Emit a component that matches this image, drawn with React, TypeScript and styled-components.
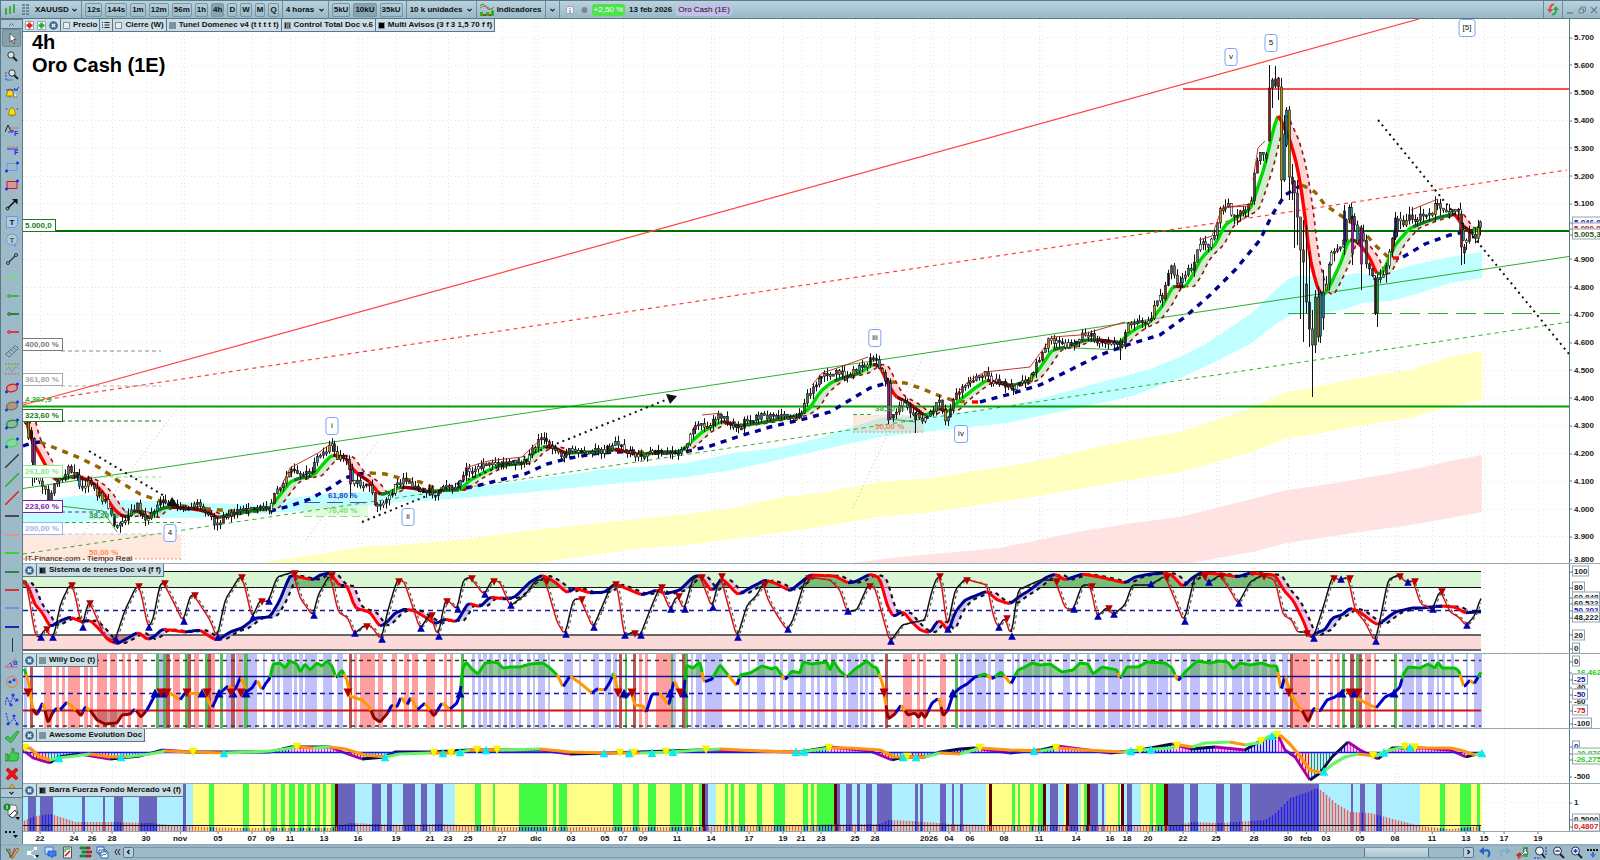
import React from "react";
import styled, { createGlobalStyle, css } from "styled-components";

/* ------------------------------------------------------------------ */
/* Palette and global rules                                            */
/* ------------------------------------------------------------------ */

const steel = "#9cbac7";
const edge = "#5c7886";
const rule = "#93a9b3";

const GlobalStyle = createGlobalStyle`
  * { box-sizing: border-box; }
  html, body { margin: 0; padding: 0; height: 100%; }
  body {
    background: #fff;
    color: #111;
    font-family: "Liberation Sans", Arial, sans-serif;
    font-size: 8px;
    line-height: 10px;
    overflow: hidden;
  }
  button, select {
    font: inherit;
    color: inherit;
    margin: 0;
    padding: 0;
    border: 0;
    background: none;
  }
  svg { display: block; }
`;

/* ------------------------------------------------------------------ */
/* Numeric helpers                                                     */
/* ------------------------------------------------------------------ */

type Pt = [number, number];
type Span = [number, number];

const pts = (s: string): Pt[] =>
  s
    .trim()
    .split(/\s+/)
    .map((p) => p.split(",").map(Number) as Pt);

const at = (data: Pt[], x: number): number => {
  if (x <= data[0][0]) return data[0][1];
  for (let i = 1; i < data.length; i++) {
    if (x <= data[i][0]) {
      const [x0, y0] = data[i - 1];
      const [x1, y1] = data[i];
      return y0 + ((y1 - y0) * (x - x0)) / (x1 - x0);
    }
  }
  return data[data.length - 1][1];
};

const smooth = (data: Pt[], step: number, radius: number): Pt[] => {
  const out: Pt[] = [];
  const last = data[data.length - 1][0];
  for (let x = data[0][0]; x <= last; x += step) {
    const y = (at(data, x - radius) + 2 * at(data, x) + at(data, x + radius)) / 4;
    out.push([x, y]);
  }
  return out;
};

const line = (data: Pt[]) => "M" + data.map((p) => `${p[0]} ${p[1].toFixed(1)}`).join("L");
const area = (top: Pt[], bottom: Pt[]) => line([...top, ...[...bottom].reverse()]) + "Z";

type Run = { color: string; d: string };

const runs = (data: Pt[], pick: (a: Pt, b: Pt) => string): Run[] => {
  const out: { color: string; data: Pt[] }[] = [];
  for (let i = 1; i < data.length; i++) {
    const color = pick(data[i - 1], data[i]);
    const tail = out[out.length - 1];
    if (tail && tail.color === color) tail.data.push(data[i]);
    else out.push({ color, data: [data[i - 1], data[i]] });
  }
  return out.map((r) => ({ color: r.color, d: line(r.data) }));
};

const lag = (data: Pt[], dx: number): Pt[] => data.map(([x]) => [x, at(data, x - dx)]);

const ribbon = (a: Pt[], b: Pt[], up: string, down: string): Run[] => {
  const out: Run[] = [];
  for (let i = 1; i < a.length; i++) {
    const color = a[i][1] < b[i][1] ? up : down;
    out.push({ color, d: area([a[i - 1], a[i]], [b[i - 1], b[i]]) });
  }
  return out;
};

const seeded = (seed: number) => () => {
  seed = (seed * 1103515245 + 12345) % 2147483648;
  return seed / 2147483648;
};

/* ------------------------------------------------------------------ */
/* Price data                                                          */
/* ------------------------------------------------------------------ */

const price = pts(`24,424 28,432 32,442 34,478 40,482 48,498 52,490 55,478 60,480 68,470 75,472 82,490 88,478 95,490
103,500 108,508 113,520 118,528 123,520 130,513 137,506 145,522 150,517 158,502 165,500 175,505 185,510 195,503
208,512 213,522 218,525 225,515 240,512 255,508 270,508 274,495 280,485 290,470 300,473 310,475 318,455 325,452
332,445 337,460 345,455 350,472 352,480 360,485 370,487 375,505 382,505 390,492 400,483 404,478 412,488 420,490
430,490 436,500 442,487 452,490 458,485 465,470 475,472 485,463 500,463 525,462 530,450 543,438 550,445 562,455
575,448 590,452 605,450 616,443 625,450 640,458 655,452 670,453 684,449 690,435 700,420 705,428 715,418 722,415
730,425 740,428 745,420 760,416 780,417 800,415 805,397 813,387 822,376 830,373 837,370 848,377 855,370 862,366
870,360 876,362 883,375 887,385 889,418 895,415 903,400 908,410 915,415 922,420 930,412 940,400 945,418 950,412
955,395 965,385 975,380 985,373 990,380 1000,382 1013,388 1020,378 1030,380 1040,355 1050,338 1060,345 1072,345
1080,336 1090,335 1100,343 1115,340 1122,345 1128,325 1138,323 1148,322 1155,307 1162,295 1168,270 1172,268
1178,288 1183,280 1192,265 1200,243 1208,248 1215,230 1220,210 1228,207 1235,220 1243,210 1250,207 1253,180
1258,152 1266,155 1326,280 1330,255 1338,250 1345,232 1348,205 1352,215 1356,240 1362,235 1366,262 1372,275
1378,285 1384,272 1390,245 1396,220 1402,225 1408,215 1413,222 1420,215 1430,212 1438,205 1441,210 1450,212
1458,213 1461,240 1464,245 1470,232 1475,235 1480,222`);

type Candle = { x: number; hi: number; lo: number; top: number; bot: number; fill: string };

const bodies = ["#4a4a4a", "#2c2c2c", "#159aa8", "#b09a1a", "#a01818", "#2f7f38", "#f4f4f4", "#555", "#111", "#777"];

const spike: [number, number, number, number, number, string][] = [
  [1269, 65, 141, 88, 141, "#a01010"],
  [1272, 78, 108, 80, 88, "#4a4a4a"],
  [1275, 66, 88, 79, 86, "#2c2c2c"],
  [1278, 77, 100, 78, 87, "#b01010"],
  [1281, 78, 203, 87, 180, "#a89400"],
  [1284, 115, 182, 134, 180, "#147f93"],
  [1286, 107, 147, 110, 145, "#147f93"],
  [1289, 106, 200, 110, 177, "#a89400"],
  [1292, 164, 200, 177, 184, "#333"],
  [1294, 180, 248, 181, 193, "#8a1a8a"],
  [1297, 180, 245, 193, 217, "#7a3a6a"],
  [1300, 217, 319, 217, 250, "#777"],
  [1303, 220, 342, 250, 262, "#5a4a1a"],
  [1306, 225, 313, 284, 302, "#444"],
  [1309, 252, 347, 302, 329, "#222"],
  [1312, 310, 397, 329, 345, "#777"],
  [1315, 290, 353, 297, 345, "#1d8a2a"],
  [1318, 286, 342, 297, 337, "#a05a10"],
  [1320, 290, 343, 293, 336, "#147f93"],
  [1323, 270, 330, 292, 318, "#147f93"],
];

const candles: Candle[] = (() => {
  const rnd = seeded(41);
  const out: Candle[] = [];
  let prev = 420;
  for (let i = 0; i < 509; i++) {
    const x = Math.round(25 + i * 2.865);
    if (x > 1267 && x < 1325) {
      prev = 290;
      continue;
    }
    const wild = x > 1325 ? 1.4 : x > 1150 || (x > 34 && x < 130) ? 1.3 : 1;
    const close = at(price, x) + (rnd() - 0.5) * 6 * wild;
    const top = Math.min(prev, close);
    const bot = Math.max(prev, close, top + 2);
    out.push({
      x,
      top,
      bot,
      hi: top - rnd() * 6 * wild,
      lo: bot + rnd() * 6 * wild,
      fill: bodies[Math.floor(rnd() * bodies.length)],
    });
    prev = close;
  }
  spike.forEach(([x, hi, lo, top, bot, fill]) => out.push({ x, hi, lo, top, bot, fill }));
  out.push({ x: 28, hi: 420, lo: 440, top: 422, bot: 438, fill: "#a89400" });
  out.push({ x: 32, hi: 432, lo: 486, top: 438, bot: 462, fill: "#9a109a" });
  out.push({ x: 350, hi: 462, lo: 498, top: 470, bot: 484, fill: "#9a109a" });
  out.push({ x: 888, hi: 378, lo: 424, top: 381, bot: 420, fill: "#a010a0" });
  out.push({ x: 915, hi: 412, lo: 433, top: 415, bot: 420, fill: "#333" });
  out.push({ x: 1120, hi: 338, lo: 360, top: 341, bot: 348, fill: "#333" });
  out.push({ x: 1344, hi: 205, lo: 255, top: 211, bot: 245, fill: "#14147f" });
  out.push({ x: 1352, hi: 215, lo: 265, top: 219, bot: 253, fill: "#b010b0" });
  out.push({ x: 1361, hi: 225, lo: 290, top: 228, bot: 264, fill: "#b010b0" });
  out.push({ x: 1375, hi: 276, lo: 315, top: 278, bot: 313, fill: "#3a1010" });
  out.push({ x: 1377, hi: 275, lo: 327, top: 278, bot: 313, fill: "#2a9a3a" });
  out.push({ x: 1395, hi: 212, lo: 240, top: 218, bot: 238, fill: "#14147f" });
  out.push({ x: 1461, hi: 211, lo: 265, top: 214, bot: 247, fill: "#a01010" });
  out.push({ x: 1464, hi: 244, lo: 264, top: 247, bot: 253, fill: "#333" });
  return out;
})();

const fastAvg = smooth(
  pts(`27,420 30,437 40,455 48,470 55,480 65,478 75,476 88,480 97,486 105,495 113,508 120,515 128,517 137,510
143,515 150,518 158,510 167,507 185,508 200,510 210,513 217,518 228,515 245,512 270,508 280,495 290,482 300,478
313,476 325,462 332,455 345,457 355,472 370,482 380,495 390,492 400,487 412,488 430,492 445,490 460,490 470,480
485,472 497,466 525,463 535,452 545,446 555,448 565,453 590,452 605,452 615,449 640,455 655,452 680,452 690,443
702,432 715,425 722,421 737,426 760,423 780,419 800,415 810,408 820,392 832,382 845,377 860,373 873,364 880,366
887,382 895,396 910,404 925,416 938,408 948,412 960,400 975,388 987,380 1000,383 1012,386 1030,380 1040,368
1052,350 1070,346 1085,340 1100,340 1120,343 1127,335 1137,328 1150,322 1163,305 1173,286 1185,287 1193,275
1200,260 1207,252 1215,245 1225,225 1235,218 1250,210 1257,190 1265,165 1272,135 1278,113 1283,125 1290,140
1297,165 1303,200 1310,260 1318,290 1323,296 1328,290 1335,275 1342,260 1348,240 1355,240 1362,247 1370,258
1377,275 1383,272 1395,245 1410,228 1425,222 1440,217 1455,214 1462,225 1472,233 1481,225`),
  3,
  2,
);
const fastLag = lag(fastAvg, 9);

const slowAvg: [string, Pt[]][] = [
  ["#00008b", pts("23,446 32,443 40,442")],
  ["#966400", pts("40,442 60,450 80,458 100,468 120,482 140,494 157,500 175,505 200,508 230,511 265,511")],
  ["#00008b", pts("270,511 290,506 310,499 330,488 345,478 358,474 370,473")],
  ["#966400", pts("370,473 385,474 400,478 420,482 432,487 450,490 460,489")],
  ["#ff0000", pts("460,489 466,489")],
  ["#00008b", pts("466,488 480,485 500,480 525,474 547,464 570,458 600,453 635,451")],
  ["#966400", pts("638,452 652,453")],
  ["#ff0000", pts("652,453 662,453")],
  ["#00008b", pts("662,453 685,452 710,446 740,436 770,427 800,420 830,412 850,400 870,388 890,382")],
  ["#966400", pts("890,382 905,383 920,388 940,396 955,401 970,402")],
  ["#ff0000", pts("972,402 980,402")],
  ["#00008b", pts("980,402 1010,394 1040,385 1070,370 1100,355 1130,344 1160,335 1185,317 1210,295 1235,270 1260,240 1272,215 1285,195 1302,185")],
  ["#966400", pts("1302,185 1315,192 1325,205 1340,215 1360,228 1375,245 1388,257")],
  ["#ff0000", pts("1393,258 1402,258")],
  ["#00008b", pts("1403,257 1425,244 1450,235 1480,229")],
];

const bands: [string, Pt[], Pt[]][] = [
  [
    "#bfffff",
    pts(`23,503 60,498 83,495 120,500 160,501 200,503 260,505 290,498 333,493 400,491 467,488 533,480 600,470 687,463
733,453 777,448 820,438 852,427 880,418 933,415 960,412 1007,406 1050,396 1083,387 1117,378 1150,369 1180,357
1207,343 1252,313 1270,295 1287,280 1300,275 1327,279 1357,273 1380,275 1413,265 1450,257 1482,252`),
    pts(`23,525 60,524 120,517 160,518 200,518 270,513 333,509 400,502 467,498 533,492 600,485 687,477 733,470 800,455
852,443 880,437 933,431 1007,423 1083,407 1133,396 1180,378 1213,363 1252,343 1270,328 1287,317 1300,313 1320,313
1343,310 1363,303 1390,301 1420,293 1450,283 1482,278`),
  ],
  [
    "#ffffbf",
    pts(`250,564 333,552 367,546 400,545 467,539 533,530 600,523 687,514 733,508 783,497 820,493 880,482 933,478
1033,462 1117,443 1180,432 1252,408 1287,392 1310,388 1353,379 1410,370 1450,357 1482,351`),
    pts(`250,565 530,565 537,563 633,549 687,545 800,530 880,517 933,512 1033,497 1117,482 1180,472 1252,452 1287,438
1310,435 1353,427 1410,418 1450,406 1482,400`),
  ],
  [
    "#ffe3e3",
    pts("845,564 900,557 1000,548 1077,532 1133,523 1180,517 1252,499 1287,490 1310,487 1353,480 1410,470 1450,461 1482,455"),
    pts("845,565 1175,565 1197,562 1252,552 1287,543 1353,533 1410,525 1450,518 1482,512"),
  ],
];

const crests = [
  "277,495 290,468 318,453 332,443",
  "465,468 488,461 522,457 543,437",
  "702,415 722,413",
  "812,385 822,373 840,367 868,357",
  "958,392 970,380 985,372 1030,367 1052,337 1080,335 1125,322",
  "1199,240 1212,236 1222,208 1250,204",
  "1222,208 1230,207 1250,206",
  "1253,180 1258,148 1265,141",
  "1411,210 1438,199",
].map(pts);

const ticks = [
  40, 74, 92, 112, 146, 181, 184, 218, 252, 270, 290, 324, 358, 362, 396, 430, 448, 468, 502, 534, 537, 571, 605, 623, 643,
  677, 711, 714, 749, 783, 801, 821, 855, 875, 878, 913, 930, 933, 949, 970, 1004, 1039, 1041, 1076, 1110, 1127, 1148, 1183,
  1216, 1219, 1254, 1288, 1306, 1326, 1360, 1395, 1398, 1432, 1466, 1484, 1504, 1538,
];

const dates: [number, string][] = [
  [40, "22"], [74, "24"], [92, "26"], [112, "28"], [146, "30"], [180, "nov"], [218, "05"], [252, "07"], [270, "09"],
  [290, "11"], [324, "13"], [358, "16"], [396, "19"], [430, "21"], [448, "23"], [468, "25"], [502, "27"], [536, "dic"],
  [571, "03"], [605, "05"], [623, "07"], [643, "09"], [677, "11"], [711, "14"], [749, "17"], [783, "19"], [801, "21"],
  [821, "23"], [855, "25"], [875, "28"], [929, "2026"], [949, "04"], [970, "06"], [1004, "08"], [1039, "11"], [1076, "14"],
  [1110, "16"], [1127, "18"], [1148, "20"], [1183, "22"], [1216, "25"], [1254, "28"], [1288, "30"], [1306, "feb"],
  [1326, "03"], [1360, "05"], [1395, "08"], [1432, "11"], [1466, "13"], [1484, "15"], [1504, "17"], [1538, "19"],
];

/* ------------------------------------------------------------------ */
/* Indicator data                                                      */
/* ------------------------------------------------------------------ */

const trainFast = pts(`23,580 27,585 35,635 40,638 45,628 52,638 55,632 60,605 67,590 70,584 74,590 82,628 88,602 92,607
105,638 115,640 125,610 137,585 141,592 148,628 153,620 160,584 163,582 175,605 183,622 190,596 193,594 210,620
217,638 225,600 240,576 244,583 252,618 260,600 268,602 277,577 293,572 300,598 313,616 318,595 330,574 338,612
348,618 354,634 365,625 372,627 381,640 388,610 397,580 404,581 420,629 430,614 438,637 445,600 450,602 457,610
463,580 470,577 484,595 492,580 500,582 510,606 525,595 536,580 545,580 557,622 565,635 573,600 580,598 593,628
610,588 614,583 618,590 624,636 633,632 640,636 650,610 660,586 670,610 677,595 684,610 693,578 700,576 712,608
720,575 737,638 747,605 757,595 763,583 768,600 780,620 787,630 793,620 805,580 807,577 830,580 840,590 847,612
857,610 868,585 875,588 885,625 890,642 902,625 910,623 925,620 932,590 938,575 942,585 947,630 955,590 965,579
987,585 993,615 998,628 1005,617 1011,637 1018,590 1040,580 1055,580 1065,608 1073,610 1082,585 1090,585 1097,617
1107,607 1113,615 1125,605 1132,585 1150,585 1165,576 1175,600 1184,622 1195,575 1203,575 1208,583 1220,575
1230,590 1238,604 1250,582 1262,575 1275,580 1283,615 1292,620 1297,632 1305,632 1313,639 1323,608 1332,577
1340,580 1348,577 1355,610 1365,622 1375,642 1380,620 1388,580 1398,575 1407,583 1413,580 1420,603 1432,610
1440,590 1450,612 1460,618 1466,626 1475,615 1481,597`);
const trainFastCurve = smooth(trainFast, 1, 2);

const trainSlow = smooth(
  pts(`23,582 28,585 35,605 42,612 50,627 60,621 70,617 82,622 90,620 100,630 108,640 117,644 128,638 138,632
148,640 155,636 162,629 185,632 200,630 212,638 218,640 230,632 242,628 255,618 270,617 280,600 290,575 313,580
320,575 330,573 340,586 347,585 355,608 370,612 380,627 387,622 395,613 405,609 415,611 425,617 435,624 445,619
457,622 468,603 480,607 490,597 505,599 515,597 530,582 542,575 555,582 567,593 575,588 590,593 605,592 615,584
630,590 642,595 657,590 665,594 680,590 693,577 700,575 712,592 722,578 738,595 750,588 765,580 775,583 790,591
800,583 810,575 835,576 848,583 855,582 870,574 880,578 887,605 893,617 903,611 910,620 920,630 930,633 938,620
943,623 948,633 955,612 965,600 987,591 997,600 1010,604 1020,596 1030,590 1045,578 1055,574 1065,580 1082,574
1100,577 1125,583 1135,577 1150,574 1165,573 1172,575 1183,587 1192,578 1200,573 1220,574 1237,577 1250,573
1275,575 1285,592 1293,600 1303,620 1310,638 1318,632 1325,630 1332,618 1342,615 1350,608 1360,612 1370,620
1378,625 1387,618 1395,612 1412,608 1422,608 1440,606 1455,607 1465,613 1475,612 1481,611`),
  3,
  2,
);
const trainSlowLag = lag(trainSlow, 7);

const turns = trainFast.slice(1, -1).flatMap(([x, y], i) => {
  const before = trainFast[i][1];
  const after = trainFast[i + 2][1];
  if (y <= before && y < after) return [{ x: x + 2, y: y + 2, up: false }];
  if (y >= before && y > after) return [{ x: x + 1, y: y - 1, up: true }];
  return [];
});

const willy = pts(`24,668 28,680 33,710 37,715 43,702 48,723 53,712 57,708 60,710 67,702 78,712 81,716 85,707 90,710
97,720 105,724 117,723 122,715 130,714 135,709 141,717 147,710 155,695 170,693 180,700 185,693 205,694 212,708
218,695 228,686 235,690 241,676 246,692 252,688 257,680 262,690 266,683 270,678 273,664 280,663 285,668 290,661
297,664 300,672 305,664 310,670 317,663 322,666 327,661 332,666 336,678 342,670 347,680 350,696 362,700 370,708
374,718 380,722 387,714 392,705 397,707 401,697 407,705 411,697 417,710 425,703 434,716 442,703 450,709 457,703
461,690 462,670 466,662 472,669 478,674 485,663 492,662 498,663 503,668 510,667 520,667 530,664 543,663 550,668
558,676 563,687 570,676 580,683 592,693 597,689 605,690 610,682 614,672 618,693 625,698 631,692 635,705 643,706
646,713 652,694 660,694 669,705 674,680 680,693 684,694 686,665 693,668 700,662 704,682 712,679 720,665 737,686
740,675 750,673 762,666 772,669 776,667 785,680 792,671 800,673 803,662 812,664 827,662 830,671 833,661 840,671
847,677 855,669 867,661 872,666 877,668 883,685 888,719 895,714 901,705 908,715 915,713 919,718 921,712 925,718
932,703 939,698 943,716 948,710 953,694 960,688 967,684 975,677 985,674 992,679 1001,672 1011,684 1018,670
1025,667 1032,663 1040,665 1050,664 1062,672 1073,670 1080,663 1088,664 1093,674 1102,667 1117,670 1120,679
1127,667 1138,667 1147,662 1165,663 1172,668 1178,681 1185,672 1197,661 1210,663 1220,661 1228,662 1233,669
1240,663 1250,665 1262,663 1270,666 1277,666 1281,691 1285,675 1290,692 1297,705 1303,712 1308,722 1314,708
1320,711 1327,700 1335,697 1345,690 1353,695 1360,700 1370,705 1376,708 1385,697 1394,693 1400,687 1403,675
1408,667 1420,668 1428,664 1435,668 1438,662 1442,668 1455,668 1459,671 1464,687 1470,680 1474,684 1481,672`);
const willyFine = smooth(willy, 1, 1);

const spans = (s: string): Span[] => s.trim().split(/\s+/).map((p) => p.split("-").map(Number) as Span);

const willyStripes: [string, Span[]][] = [
  [
    "#c0c0fb",
    spans(`24-27 159-163 226-231 236-244 248-257 263-265 272-275 277-280 283-292 294-297 299-303 305-317 323-332
337-343 472-475 478-481 483-487 489-493 498-501 504-507 509-513 516-521 527-530 533-535 538-545 548-550 564-573
579-581 593-599 605-611 613-617 673-676 691-693 696-702 705-722 739-742 748-750 757-765 773-776 780-783 788-794
800-806 811-814 817-820 825-828 831-837 843-846 848-858 860-863 865-868 871-874 960-964 966-972 975-986 988-991
995-1004 1012-1014 1017-1020 1023-1032 1034-1040 1043-1046 1049-1052 1063-1070 1075-1078 1087-1090 1095-1105
1108-1120 1122-1130 1132-1135 1138-1141 1147-1157 1158-1168 1170-1172 1181-1187 1190-1200 1207-1213 1216-1218
1224-1227 1232-1242 1244-1250 1253-1259 1262-1267 1270-1276 1282-1288 1402-1414 1416-1422 1428-1434 1437-1439
1442-1445 1451-1454 1466-1468 1474-1482`),
  ],
  [
    "#ff9f9f",
    spans(`44-52 56-59 62-65 68-80 84-88 90-93 97-107 110-117 122-125 128-131 137-143 173-180 194-199 209-215 238-241
354-357 360-375 378-383 392-397 404-409 412-418 426-435 444-447 450-453 639-642 645-648 656-672 903-912 917-920
923-926 940-946 1292-1310 1316-1319 1330-1333 1337-1340 1365-1371 1374-1376`),
  ],
  ["#5cb95c", spans("156-159 163-166 185-188 205-208 220-223 244-248 461-464 625-627 671-673 685-688 955-958 1342-1345 1356-1359 1394-1397")],
  ["#b85858", spans("30-33 166-170 188-191 208-211 231-235 349-352 619-622 633-636 682-685 885-888 1290-1293 1350-1354 1359-1362")],
];
const willyDown = [28, 161, 167, 187, 207, 231, 241, 348, 618, 632, 680, 884, 1289, 1350, 1358];
const willyUp = [155, 163, 202, 219, 233, 246, 460, 624, 670, 684, 953, 1342, 1354, 1394];

const aweSlow = pts(`23,748 30,748 40,757 50,760 58,758 75,756 90,754 110,757 125,757 150,754 165,751 190,752 225,753
250,752 270,751 285,749 297,747 313,748 330,747 345,749 365,755 385,757 400,754 430,753 455,753 470,750 500,750
540,749 570,752 605,753 640,753 670,752 700,750 720,749 760,751 800,752 830,748 850,748 880,750 895,757 925,757
940,753 960,754 980,748 1010,750 1040,751 1057,748 1085,750 1123,752 1140,750 1170,748 1180,745 1192,747 1205,743
1230,742 1245,745 1258,743 1270,736 1280,735 1290,744 1300,756 1310,770 1322,773 1333,764 1345,757 1358,754
1375,756 1390,750 1405,747 1420,748 1450,748 1460,750 1475,755 1482,753`);
const aweFast = pts(`23,750 33,758 50,763 58,757 80,754 110,759 140,756 162,750 190,752 270,752 290,747 330,747
345,753 362,759 385,757 395,752 430,752 470,750 540,750 570,754 610,753 700,750 800,752 830,747 870,751 892,760
905,757 925,757 940,752 960,749 975,748 1010,753 1040,750 1057,746 1110,753 1140,750 1172,744 1190,749 1215,747
1245,750 1262,740 1278,735 1285,750 1295,757 1310,780 1320,773 1332,757 1348,742 1360,750 1378,759 1392,748
1420,748 1450,750 1466,757 1482,753`);
const aweDown = [25, 193, 297, 434, 451, 477, 497, 620, 634, 666, 706, 829, 907, 980, 1056, 1140, 1177, 1261, 1277, 1373, 1405, 1415];
const aweUp = [59, 121, 224, 385, 443, 460, 486, 604, 629, 652, 673, 796, 804, 903, 916, 1034, 1131, 1151, 1272, 1324, 1384, 1410, 1482];

const force: [string, Span[]][] = [
  ["#aeefff", spans("23-193 355-455 708-716 840-986 1046-1064 1078-1081 1098-1106 1124-1141 1168-1420")],
  ["#ffff88", spans("193-335 455-702 716-834 986-1043 1064-1066 1081-1087 1106-1120 1141-1164 1420-1482")],
  [
    "#6a64be",
    spans(`28-36 40-53 82-85 103-105 114-123 139-157 183-186 338-355 372-381 387-392 403-415 421-427 435-443 705-708
837-840 846-852 857-860 866-872 877-892 915-918 920-923 940-946 952-954 960-963 1050-1058 1069-1078 1090-1098
1102-1104 1127-1132 1168-1184 1190-1198 1216-1224 1230-1242 1250-1319 1351-1353 1360-1365 1376-1382`),
  ],
  [
    "#42fb42",
    spans(`209-214 243-249 263-265 271-277 281-285 289-295 298-304 307-311 315-320 323-326 331-335 475-481 493-495
519-547 553-556 559-567 613-622 633-639 648-656 670-682 685-693 699-702 725-728 731-734 739-745 757-762 774-785
803-808 811-814 817-834 1012-1015 1018-1020 1030-1034 1038-1043 1084-1087 1118-1120 1150-1153 1156-1164
1440-1445 1460-1471 1477-1480`),
  ],
  ["#620000", spans("335-338 702-705 834-837 989-992 1043-1046 1066-1069 1087-1090 1121-1124 1164-1168")],
];
const forceTop = pts(`23,821 35,816 50,814 60,817 75,822 110,822 150,823 180,826 240,828 330,828 350,823 400,825 440,824
500,827 700,827 720,826 880,824 888,820 910,821 950,824 990,825 1080,826 1180,825 1190,822 1220,823 1265,820
1275,813 1290,798 1310,791 1316,788 1322,791 1335,803 1350,812 1370,813 1400,821 1420,826 1450,829 1481,826`);
const isForceBlue = (x: number) =>
  force[2][1].some(([a, b]) => x >= a && x < b) || force[3][1].some(([a, b]) => x >= a && x < b);

/* ------------------------------------------------------------------ */
/* Plot scaffolding                                                    */
/* ------------------------------------------------------------------ */

const X0 = 23;
const XW = 1546;

const PanelRow = styled.section`
  position: relative;
  display: grid;
  grid-template-columns: minmax(0, 1fr) 31px;
  min-height: 0;
  &::after {
    content: "";
    position: absolute;
    inset: auto 0 0 0;
    height: 1px;
    background: ${rule};
  }
`;

const Plot = styled.div`
  position: relative;
  min-width: 0;
  min-height: 0;
  overflow: hidden;
`;

const Canvas = styled.svg`
  position: absolute;
  inset: 0;
  width: 100%;
  height: 100%;
`;

const Scale = styled.div`
  position: relative;
  border-left: 1px solid ${edge};
  overflow: hidden;
  font-weight: bold;
`;

const ScaleMark = styled.span<{ $boxed?: boolean; $color?: string }>`
  position: absolute;
  left: 2px;
  padding: 0 1px 0 2px;
  transform: translateY(-50%);
  line-height: 9px;
  white-space: nowrap;
  color: ${(p) => p.$color ?? "#222"};
  ${(p) =>
    p.$boxed &&
    css`
      background: #fff;
      border: 1px solid #8fa3ad;
      padding: 0 1px;
    `}
  &::before {
    content: "";
    position: absolute;
    left: -3px;
    top: 50%;
    width: 3px;
    height: 1px;
    background: ${edge};
  }
`;

type Mark = { y: number; text: string; boxed?: boolean; color?: string };

const Tabs = styled.div`
  position: absolute;
  top: 0;
  left: 0;
  display: flex;
  height: 13px;
  background: #cbdde5;
  border: solid ${edge};
  border-width: 0 1px 1px 0;
`;

const Tab = styled.button`
  display: flex;
  align-items: center;
  gap: 3px;
  padding: 0 2px;
  font-weight: bold;
  white-space: nowrap;
  & + & {
    border-left: 1px solid ${edge};
  }
`;

const Swatch = styled.i<{ $fill: string }>`
  width: 7px;
  height: 7px;
  background: ${(p) => p.$fill};
  border: 1px solid #7d939e;
`;

const CloseIcon = () => (
  <svg width="9" height="9" viewBox="0 0 10 10">
    <circle cx="5" cy="5" r="4.8" fill="#3c6791" />
    <path d="M3 3l4 4M7 3L3 7" stroke="#e8f2f8" strokeWidth="1.5" />
  </svg>
);

const grey = "#7d929c";
const stripes = "linear-gradient(90deg,#111 0 40%,#bbb 40% 50%,#333 50%)";

type PanelProps = {
  y0: number;
  h: number;
  title?: string;
  fill?: string;
  marks: Mark[];
  over?: React.ReactNode;
  children: React.ReactNode;
};

function Panel({ y0, h, title, fill = grey, marks, over, children }: PanelProps) {
  return (
    <PanelRow>
      <Plot>
        <Canvas viewBox={`${X0} ${y0} ${XW} ${h}`} preserveAspectRatio="none" aria-hidden="true">
          <g stroke="#e4e4e4" strokeDasharray="1 3">
            {ticks.map((x) => (
              <path key={x} d={`M${x + 0.5} ${y0}v${h}`} />
            ))}
          </g>
          {children}
        </Canvas>
        {over}
        {title && (
          <Tabs>
            <Tab aria-label={`Cerrar ${title}`}>
              <CloseIcon />
            </Tab>
            <Tab>
              <Swatch $fill={fill} />
              {title}
            </Tab>
          </Tabs>
        )}
      </Plot>
      <Scale>
        {marks.map((m) => (
          <ScaleMark
            key={m.text + m.y}
            $boxed={m.boxed}
            $color={m.color}
            style={{ top: `${((m.y - y0) / h) * 100}%` }}
          >
            {m.text}
          </ScaleMark>
        ))}
      </Scale>
    </PanelRow>
  );
}

const Tri = ({ x, y, up, r, fill }: { x: number; y: number; up: boolean; r: number; fill: string }) => (
  <path d={up ? `M${x - r} ${y + r}h${2 * r}L${x} ${y - r}z` : `M${x - r} ${y - r}h${2 * r}L${x} ${y + r}z`} fill={fill} />
);

const Strokes = ({ list, width, dash }: { list: Run[]; width: number; dash?: string }) => (
  <g fill="none" strokeWidth={width} strokeDasharray={dash} strokeLinejoin="round">
    {list.map((r, i) => (
      <path key={i} d={r.d} stroke={r.color} />
    ))}
  </g>
);

const Fills = ({ list, opacity }: { list: Run[]; opacity: number }) => (
  <g fillOpacity={opacity}>
    {list.map((r, i) => (
      <path key={i} d={r.d} fill={r.color} />
    ))}
  </g>
);

/* ------------------------------------------------------------------ */
/* Price panel                                                         */
/* ------------------------------------------------------------------ */

const MAIN_Y = 19;
const MAIN_H = 545;
const pos = (x: number, y: number) => ({
  left: `${((x - X0) / XW) * 100}%`,
  top: `${((y - MAIN_Y) / MAIN_H) * 100}%`,
});

const WaveTag = styled.span`
  position: absolute;
  min-width: 13px;
  padding: 0 3px;
  border: 1px solid #7aa5f5;
  border-radius: 3px;
  background: #fff;
  line-height: 16px;
  text-align: center;
  transform: translate(-50%, -50%);
`;

const waves: [number, number, string][] = [
  [170, 533, "4"],
  [332, 426, "i"],
  [408, 517, "ii"],
  [875, 338, "iii"],
  [961, 434, "iv"],
  [1231, 57, "v"],
  [1271, 43, "5"],
  [1467, 28, "[5]"],
];

const Level = styled.span<{ $color: string; $boxed?: boolean }>`
  position: absolute;
  padding: 0 3px 0 2px;
  height: 13px;
  line-height: 12px;
  font-weight: bold;
  white-space: nowrap;
  color: ${(p) => p.$color};
  ${(p) =>
    p.$boxed &&
    css`
      background: #fff;
      border: 1px solid ${p.$color};
      border-left: 0;
    `}
`;

const levels: [number, number, string, string, boolean][] = [
  [23, 219, "5.000,0", "#1a7a1a", true],
  [23, 338, "400,00 %", "#7a7a7a", true],
  [23, 373, "361,80 %", "#a6a6a6", true],
  [23, 394, "4.367,9", "#2fb02f", false],
  [23, 409, "323,60 %", "#137a13", true],
  [23, 465, "261,80 %", "#86ea86", true],
  [23, 500, "223,60 %", "#8418ae", true],
  [23, 522, "200,00 %", "#9db4ea", true],
  [87, 510, "38,20 %", "#2c9a2c", false],
  [87, 547, "50,00 %", "#ff8850", false],
  [326, 490, "61,80 %", "#2a3fd8", false],
  [326, 505, "76,40 %", "#7bdc7b", false],
  [873, 403, "38,20 %", "#3fae3f", false],
  [873, 421, "50,00 %", "#f08858", false],
];

const Heading = styled.h1`
  position: absolute;
  top: 12px;
  left: 9px;
  margin: 0;
  font-size: 20px;
  line-height: 23px;
  color: #000;
`;

const Credit = styled.span`
  position: absolute;
  left: 2px;
  bottom: 0;
`;

const AddIcon = ({ color }: { color: string }) => (
  <svg width="9" height="9" viewBox="0 0 9 9">
    <path d="M.5.5h8v8h-8z" fill="#fff" stroke="#93a9b3" />
    <path d="M4.5 1.5v6M1.5 4.5h6" stroke={color} strokeWidth="2.4" />
  </svg>
);

const priceMarks: Mark[] = [
  ...Array.from({ length: 19 }, (_, i) => i)
    .filter((i) => i !== 7)
    .map((i) => ({ y: 37 + i * 27.74, text: `${(5.7 - i / 10).toFixed(1)}00` })),
  { y: 559, text: "3.800" },
  { y: 222, text: "5.046,0", boxed: true, color: "#1414b0" },
  { y: 228, text: "5.000,0", boxed: true, color: "#c01414" },
  { y: 234, text: "5.005,3", boxed: true, color: "#2d5a1a" },
];

const avgColor = (a: Pt, b: Pt) => {
  const s = (b[1] - a[1]) / (b[0] - a[0]);
  if (s > 0.85) return "#ff0000";
  if (s > 0.05) return "#8b0000";
  if (s > -0.45) return "#0c7a14";
  return "#00d800";
};

const fibDashes: [number, string][] = [
  [351, "#8a8a8a"],
  [386, "#b0b0b0"],
  [421, "#137a13"],
  [477, "#86ea86"],
  [512, "#8418ae"],
  [534, "#b9c9f2"],
];

function PricePanel() {
  return (
    <Panel
      y0={MAIN_Y}
      h={MAIN_H}
      marks={priceMarks}
      over={
        <>
          <Heading>
            4h
            <br />
            Oro Cash (1E)
          </Heading>
          {levels.map(([x, y, text, color, boxed]) => (
            <Level key={x + "-" + y} $color={color} $boxed={boxed} style={pos(x, y)}>
              {text}
            </Level>
          ))}
          {waves.map(([x, y, text]) => (
            <WaveTag key={text} style={pos(x, y)}>
              {text}
            </WaveTag>
          ))}
          <Credit>IT-Finance.com - Tiempo Real</Credit>
          <Tabs>
            <Tab aria-label="Añadir">
              <AddIcon color="#e02020" />
              <AddIcon color="#20b030" />
              <CloseIcon />
            </Tab>
            <Tab>
              <Swatch $fill="#e4eef2" />
              Precio
            </Tab>
            <Tab aria-label="Lista">
              <svg width="8" height="8" viewBox="0 0 8 8">
                <path d="M0 1.5h1M2.500 1.500h5M0 4h1M2.500 4h5M0 6.500h1M2.500 6.500h5" stroke="#222" />
              </svg>
            </Tab>
            <Tab>
              <Swatch $fill="#e4eef2" />
              Cierre (W)
            </Tab>
            <Tab>
              <Swatch $fill={grey} />
              Tunel Domenec v4 (t t t t t)
            </Tab>
            <Tab>
              <Swatch $fill="linear-gradient(90deg,#222 0 20%,#3c3 20% 40%,#c3c 40% 60%,#3ac 60% 80%,#a22 80%)" />
              Control Total Doc v.6
            </Tab>
            <Tab>
              <Swatch $fill="#000" />
              Multi Avisos (3 f 3 1,5 70 f f)
            </Tab>
          </Tabs>
        </>
      }
    >
      <g stroke="#e4e4e4" strokeDasharray="1 3">
        {Array.from({ length: 19 }, (_, i) => (
          <path key={i} d={`M23 ${Math.round(37 + i * 27.74) + 0.5}h1546`} />
        ))}
      </g>
      {bands.map(([fill, top, bottom]) => (
        <path key={fill} d={area(top, bottom)} fill={fill} />
      ))}
      <path d="M23 534h158v25H23z" fill="#ffe6da" fillOpacity=".9" />
      <path d="M853 415h71v17h-71z" fill="#f3a987" fillOpacity=".25" />
      <path d="M304 503h64v13h-64z" fill="#c9f7c9" fillOpacity=".5" />
      <g stroke="#bbb" strokeDasharray="1 3">
        <path d="M72 548L178 408M306 540L378 441M853 508L923 357" />
      </g>

      <g fill="none" stroke="#2fae2f">
        <path d="M23 488.500L1569 256.500" />
        <path d="M23 554L1569 322" strokeDasharray="4 4" />
        <path d="M1288 313.500H1565" strokeDasharray="20 8" />
        <path d="M23 522.500H181M853 414.500H872" strokeDasharray="4 3" />
        <path d="M60 506L103 511L117 532M890 419L916 422M1052 347L1122 350" />
      </g>
      <path d="M304 516.500H368" stroke="#8ae88a" strokeDasharray="8 4" />
      <path d="M304 502.500H368" stroke="#3a4fe0" strokeDasharray="16 7" />
      <path d="M23 559H181M853 432H924" stroke="#ff8850" strokeDasharray="2 2" />
      {fibDashes.map(([y, color]) => (
        <path key={y} d={`M61 ${y}H161`} stroke={color} strokeDasharray="4 3" />
      ))}

      <Fills list={ribbon(fastAvg, fastLag, "#a9dba9", "#ffb0b0")} opacity={0.55} />

      <path d="M23 231H1569" stroke="#006f00" strokeWidth="2" />
      <path d="M23 406.500H1569" stroke="#00a000" strokeWidth="2" />
      <path d="M1183 89H1569" stroke="#ff4c4c" strokeWidth="2" />
      <path d="M23 405L1419 19" stroke="#ff4040" strokeWidth="1.2" />
      <path d="M23 403L1567 170" stroke="#ff4040" strokeWidth="1.2" strokeDasharray="4 4" />

      {slowAvg.map(([color, d], i) => (
        <path key={i} d={line(d)} fill="none" stroke={color} strokeWidth="3.4" strokeDasharray="6 6" />
      ))}
      <path d={line(fastLag)} fill="none" stroke="#9b1010" strokeWidth="1.6" strokeDasharray="4 4" />
      <Strokes list={runs(fastAvg, avgColor)} width={3.4} />

      <g>
        {candles.map((c, i) => (
          <g key={i}>
            <path d={`M${c.x + 0.5} ${c.hi.toFixed(1)}V${c.lo.toFixed(1)}`} stroke="#111" strokeWidth="1" />
            <rect
              x={c.x - 0.5}
              y={c.top}
              width="2"
              height={c.bot - c.top}
              fill={c.fill}
              stroke="#111"
              strokeWidth=".6"
            />
          </g>
        ))}
      </g>
      <g fill="none" stroke="#b22222" strokeWidth=".9">
        {crests.map((d, i) => (
          <path key={i} d={line(d)} />
        ))}
      </g>

      <g stroke="#111" strokeWidth="2" strokeDasharray="2 4">
        <path d="M89 451L166 497" />
        <path d="M362 522L668 399" />
        <path d="M1378 120L1569 354" />
      </g>
      <path d="M167 506h11l-6-9zM666 394l11 2-7 8z" fill="#111" />
    </Panel>
  );
}

/* ------------------------------------------------------------------ */
/* Indicator panels                                                    */
/* ------------------------------------------------------------------ */

function TrainPanel() {
  const clipped = trainSlow.map(([x, y]) => [x, Math.min(y, 587)] as Pt);
  const low = trainSlow.map(([x, y]) => [x, Math.max(y, 635)] as Pt);
  return (
    <Panel
      y0={564}
      h={90}
      title="Sistema de trenes Doc v4 (f f)"
      fill={stripes}
      marks={[
        { y: 571, text: "100", boxed: true },
        { y: 587, text: "80", boxed: true },
        { y: 597, text: "60,848", boxed: true },
        { y: 603, text: "60,522", boxed: true },
        { y: 610, text: "50,202", boxed: true, color: "#1414a0" },
        { y: 617, text: "48,222", boxed: true },
        { y: 635, text: "20", boxed: true },
        { y: 648, text: "0", boxed: true },
      ]}
    >
      <path d="M23 572H1481V587H23z" fill="#d8f5d4" />
      <path d="M23 636H1481V649H23z" fill="#fddada" />
      <path d={area(clipped, [[23, 587], [1481, 587]])} fill="#78bd78" />
      <path d={area([[23, 635], [1481, 635]], low)} fill="#d88080" />
      <path d="M23 571.500H1481M23 587.500H1481" stroke="#111" />
      <path d="M23 635H1481M23 650H1481" stroke="#666" strokeWidth="2" />
      <path d="M23 610.500H1481" stroke="#1414a0" strokeWidth="1.4" strokeDasharray="5 4" />
      <Fills list={ribbon(trainSlow, trainSlowLag, "#a8a8ee", "#ee9de6")} opacity={0.6} />
      <path d={line(trainSlowLag)} fill="none" stroke="#151515" strokeWidth="2.200" strokeDasharray="4 4" />
      <Strokes list={runs(trainSlow, (a, b) => (b[1] > a[1] ? "#ff0000" : "#00008f"))} width={3} />
      <path d={line(lag(trainFastCurve, 2))} fill="none" stroke="#555" strokeWidth="1.2" strokeDasharray="3 3" />
      <Strokes list={runs(trainFastCurve, (a, b) => (b[1] > a[1] ? "#d81414" : "#111111"))} width={1.5} />
      {turns.map((t, i) => (
        <Tri key={i} x={t.x} y={t.y} up={t.up} r={3.8} fill={t.up ? "#0000b4" : "#b40000"} />
      ))}
    </Panel>
  );
}

const willyColor = (a: Pt, b: Pt) => {
  if (b[1] < 676) return "#00c400";
  if (b[1] > 711) return "#960000";
  return b[1] > a[1] ? "#ff9900" : "#0000c8";
};

function WillyPanel() {
  return (
    <Panel
      y0={654}
      h={75}
      title="Willy Doc (t)"
      marks={[
        { y: 661, text: "0", boxed: true },
        { y: 672, text: "-16,462", color: "#22cc22" },
        { y: 687, text: "-40" },
        { y: 701, text: "-60" },
        { y: 679, text: "-25", boxed: true, color: "#1414a0" },
        { y: 694, text: "-50", boxed: true, color: "#1414a0" },
        { y: 710, text: "-75", boxed: true, color: "#c81414" },
        { y: 723, text: "-100", boxed: true },
      ]}
    >
      {willyStripes.map(([fill, list]) => (
        <g key={fill} fill={fill}>
          {list.map(([a, b]) => (
            <rect key={a} x={a} y="654" width={b - a} height="75" />
          ))}
        </g>
      ))}
      <path d={area(willyFine.map(([x, y]) => [x, Math.min(y, 676)] as Pt), [[24, 676], [1481, 676]])} fill="#57a857" fillOpacity=".6" />
      <path d={area([[24, 711], [1481, 711]], willyFine.map(([x, y]) => [x, Math.max(y, 711)] as Pt))} fill="#b05050" fillOpacity=".6" />
      <path d="M23 660.500H1481M23 726H1481" stroke="#333" strokeWidth="1.4" strokeDasharray="4 4" />
      <path d="M23 676.500H1481" stroke="#0f0f96" strokeWidth="1.6" />
      <path d="M23 710.500H1481" stroke="#d01010" strokeWidth="1.8" />
      <path d="M23 693.500H1481" stroke="#1414a0" strokeWidth="1.4" strokeDasharray="5 4" />
      <Strokes list={runs(willyFine, willyColor)} width={3} />
      {willyUp.map((x) => (
        <Tri key={"u" + x} x={x} y={693} up r={4.5} fill="#0000b4" />
      ))}
      {willyDown.map((x) => (
        <Tri key={"d" + x} x={x} y={693} up={false} r={4.5} fill="#b40000" />
      ))}
    </Panel>
  );
}

function AwesomePanel() {
  const bars = Array.from({ length: 486 }, (_, i) => 24 + i * 3);
  return (
    <Panel
      y0={729}
      h={55}
      title="Awesome Evolution Doc"
      marks={[
        { y: 746, text: "0", boxed: true, color: "#1414c0" },
        { y: 753, text: "-20,876", boxed: true, color: "#22cc22" },
        { y: 759, text: "-26,275", boxed: true, color: "#22cc22" },
        { y: 776, text: "-500" },
      ]}
    >
      <path d="M23 776.500H1569" stroke="#e4e4e4" strokeDasharray="1 3" />
      {bars.map((x) => {
        const y = at(aweFast, x);
        const rising = at(aweFast, x + 3) < y;
        const color = y < 752.5 ? (rising ? "#1414e0" : "#e81ee8") : rising ? "#0a9090" : "#e01414";
        return <path key={x} d={`M${x + 0.5} 752.500V${y.toFixed(1)}`} stroke={color} strokeWidth="1.4" />;
      })}
      <Strokes list={runs(aweFast, (a, b) => (b[1] > a[1] ? "#a800a8" : "#0a0a46"))} width={2.8} />
      <path d="M23 752.500H1481" stroke="#1414e8" strokeWidth="1.5" />
      <Strokes list={runs(aweSlow, (a, b) => (b[1] >= a[1] ? "#ff9410" : "#66f566"))} width={3.2} />
      {aweDown.map((x) => (
        <Tri key={"d" + x} x={x} y={at(aweSlow, x)} up={false} r={4.3} fill="#f6f600" />
      ))}
      {aweUp.map((x) => (
        <Tri key={"u" + x} x={x} y={at(aweSlow, x)} up r={4.3} fill="#00ecf6" />
      ))}
    </Panel>
  );
}

function ForcePanel() {
  const bars = Array.from({ length: 486 }, (_, i) => 24 + i * 3);
  return (
    <Panel
      y0={784}
      h={48}
      title="Barra Fuerza Fondo Mercado v4 (f)"
      fill={stripes}
      marks={[
        { y: 802, text: "1" },
        { y: 819, text: "0,5000", boxed: true },
        { y: 826, text: "0,4807", boxed: true, color: "#e01414" },
      ]}
    >
      <path d="M1482 802.500H1569" stroke="#e4e4e4" strokeDasharray="1 3" />
      {force.map(([fill, list]) => (
        <g key={fill} fill={fill}>
          {list.map(([a, b]) => (
            <rect key={a} x={a} y="784" width={b - a} height="47" />
          ))}
        </g>
      ))}
      {bars.map((x) => (
        <path
          key={x}
          d={`M${x + 0.5} 831V${at(forceTop, x).toFixed(1)}`}
          stroke={isForceBlue(x) ? "#2424e0" : x > 192 && x < 335 ? "#ff6a3c" : "#ea5c5c"}
          strokeWidth="1.5"
        />
      ))}
      <path d="M23 825.500H1481" stroke="#111" />
    </Panel>
  );
}

/* ------------------------------------------------------------------ */
/* Time axis                                                           */
/* ------------------------------------------------------------------ */

const TimeRow = styled.div`
  display: grid;
  grid-template-columns: minmax(0, 1fr) 31px;
`;

const TimeTrack = styled.div`
  position: relative;
`;

const TimeMark = styled.span`
  position: absolute;
  top: 2px;
  transform: translateX(-50%);
  font-weight: bold;
  white-space: nowrap;
  &::before {
    content: "";
    position: absolute;
    left: 50%;
    top: -2px;
    width: 1px;
    height: 2px;
    background: ${edge};
  }
`;

/* ------------------------------------------------------------------ */
/* Top toolbar                                                         */
/* ------------------------------------------------------------------ */

const TopBar = styled.header`
  display: flex;
  align-items: center;
  height: 19px;
  padding: 0 2px 0 3px;
  background: linear-gradient(#b9d3df, #98b8c5);
  border: solid ${edge};
  border-width: 1px 0 1px 1px;
  font-weight: bold;
  white-space: nowrap;
`;

const Divider = styled.i`
  width: 1px;
  align-self: stretch;
  margin: 0 3px;
  background: #6f8c9a;
`;

const Group = styled.div<{ $gap: number }>`
  display: flex;
  align-items: center;
  gap: ${(p) => p.$gap}px;
`;

const Key = styled.button<{ $on?: boolean }>`
  height: 14px;
  padding: 0 1px;
  border: 1px solid #7896a4;
  border-radius: 2px;
  font-weight: bold;
  background: ${(p) => (p.$on ? "#87a3b0" : "transparent")};
`;

const Picker = styled.label<{ $w: number }>`
  display: flex;
  align-items: center;
  width: ${(p) => p.$w}px;
  select {
    flex: 1;
    min-width: 0;
    height: 14px;
    appearance: none;
    font-weight: bold;
  }
`;

const Plain = styled.button`
  display: flex;
  align-items: center;
  justify-content: center;
  gap: 3px;
  height: 15px;
  font-weight: bold;
`;

const Pill = styled.span<{ $tone: "gain" | "name" }>`
  padding: 0 2px;
  border-radius: 3px;
  font-weight: normal;
  line-height: 12px;
  color: ${(p) => (p.$tone === "gain" ? "#fff" : "#111")};
  background: ${(p) => (p.$tone === "gain" ? "#4fe24f" : "#c3bfe8")};
`;

const Spacer = styled.span`
  flex: 1;
`;

const Chevron = () => (
  <svg width="7" height="6" viewBox="0 0 7 6" fill="none" stroke="#222" strokeWidth="1.2">
    <path d="M1.500 2l2 2 2-2" />
  </svg>
);

const CandleLogo = () => (
  <svg width="12" height="12" viewBox="0 0 12 12">
    <path d="M2 4v7M6 2v8M10 0v9" stroke="#1c6a1c" />
    <path d="M1 5h2v5H1zM5 4h2v5H5zM9 2h2v5H9z" fill="#3fae2c" />
  </svg>
);

const Grip = () => (
  <svg width="7" height="12" viewBox="0 0 7 12" fill="#6d8894">
    <path d="M0 0h3v2H0zM4 0h3v2H4zM0 3h3v2H0zM4 3h3v2H4zM0 6h3v2H0zM4 6h3v2H4zM0 9h3v2H0zM4 9h3v2H4z" />
  </svg>
);

const IndicatorIcon = () => (
  <svg width="14" height="13" viewBox="0 0 14 13" fill="none">
    <path d="M0 13V9h3v2h3V9h3v2h2V8h3v5z" fill="#1db81d" />
    <path d="M3 11h3v2H3zM9 11h2v2H9z" fill="#e02020" />
    <path d="M0 3c3-4 5 0 7 2s4 2 7-1" stroke="#2b8a3a" />
    <path d="M0 5c3-2 5-2 7-1s4 3 7 4" stroke="#d06060" />
  </svg>
);

const SyncIcon = () => (
  <svg width="12" height="13" viewBox="0 0 12 13" fill="none" strokeWidth="1.900">
    <path d="M7 1.500C4 1 3 4 3 7" stroke="#e8453a" />
    <path d="M0 6h6L3 10z" fill="#e8453a" />
    <path d="M5 11.500c3 .5 4-2 4-5" stroke="#22b038" />
    <path d="M6 7h6L9 3z" fill="#22b038" />
  </svg>
);

function Toolbar() {
  return (
    <TopBar>
      <Group $gap={6}>
        <CandleLogo />
        <Grip />
        <Picker $w={43} aria-label="Instrumento">
          <select defaultValue="XAUUSD">
            <option>XAUUSD</option>
          </select>
          <Chevron />
        </Picker>
      </Group>
      <Divider />
      <Group $gap={3}>
        {["12s", "144s", "1m", "12m", "56m", "1h", "4h", "D", "W", "M", "Q"].map((k) => (
          <Key key={k} $on={k === "4h"}>
            {k}
          </Key>
        ))}
      </Group>
      <Divider />
      <Picker $w={39} aria-label="Intervalo">
        <select defaultValue="4 horas">
          <option>4 horas</option>
        </select>
        <Chevron />
      </Picker>
      <Divider />
      <Group $gap={3}>
        {["5kU", "10kU", "35kU"].map((k) => (
          <Key key={k} $on={k === "10kU"}>
            {k}
          </Key>
        ))}
      </Group>
      <Divider />
      <Picker $w={63} aria-label="Unidades">
        <select defaultValue="10 k unidades">
          <option>10 k unidades</option>
        </select>
        <Chevron />
      </Picker>
      <Divider />
      <Plain>
        <IndicatorIcon />
        Indicadores
      </Plain>
      <Divider />
      <Plain aria-label="Más indicadores">
        <Chevron />
      </Plain>
      <Divider />
      <Group $gap={4}>
        <svg width="14" height="8" viewBox="0 0 14 8">
          <path d="M3.500.5h7v7h-7z" fill="#eef4f6" stroke="#9aaab2" />
          <path d="M7 2v1M7 4v3" stroke="#777" />
        </svg>
        <svg width="7" height="8" viewBox="0 0 7 8">
          <circle cx="3.500" cy="4" r="3" fill="#7f8488" />
        </svg>
        <Pill $tone="gain">+2,50 %</Pill>
        13 feb 2026
        <Pill $tone="name">Oro Cash (1E)</Pill>
      </Group>
      <Spacer />
      <Divider />
      <Plain aria-label="Sincronizar">
        <SyncIcon />
      </Plain>
      <Divider />
      <Group $gap={4}>
        <Plain aria-label="Minimizar">
          <svg width="8" height="8" viewBox="0 0 8 8" stroke="#6d828d" strokeWidth="1.500">
            <path d="M1 7h6" />
          </svg>
        </Plain>
        <Plain aria-label="Restaurar">
          <svg width="8" height="8" viewBox="0 0 8 8" stroke="#6d828d" fill="none">
            <path d="M1 3h4.500v4H1zM2.500 3V1h5v4.500H5.500" />
          </svg>
        </Plain>
        <Plain aria-label="Cerrar">
          <svg width="8" height="8" viewBox="0 0 8 8" stroke="#6d828d" strokeWidth="1.400">
            <path d="M1 1l6 6M7 1L1 7" />
          </svg>
        </Plain>
      </Group>
    </TopBar>
  );
}

/* ------------------------------------------------------------------ */
/* Drawing tools                                                       */
/* ------------------------------------------------------------------ */

const Side = styled.nav`
  display: flex;
  flex-direction: column;
  background: ${steel};
  border: solid ${edge};
  border-width: 0 1px;
  min-height: 0;
`;

const ToolList = styled.div`
  flex: 1;
  display: grid;
  grid-auto-rows: minmax(0, 1fr);
  min-height: 0;
`;

const Tool = styled.button<{ $on?: boolean }>`
  display: flex;
  align-items: center;
  justify-content: center;
  min-height: 0;
  margin: 0 1px;
  border: 1px solid ${(p) => (p.$on ? "#708b98" : "transparent")};
  border-radius: 2px;
  background: ${(p) => (p.$on ? "#869fab" : "transparent")};
`;

const SideRow = styled.button<{ $h: number; $line?: boolean }>`
  display: flex;
  align-items: center;
  justify-content: center;
  height: ${(p) => p.$h}px;
  overflow: hidden;
  ${(p) =>
    p.$line &&
    css`
      border: solid ${edge};
      border-width: 1px 0;
      background: #adc8d4;
    `}
`;

const plus = (x: number, y: number) => <path d={`M${x - 1.5} ${y}h3M${x} ${y - 1.5}v3`} stroke="#1a2af0" strokeWidth="1.3" />;
const lens = (x: number, y: number) => (
  <>
    <circle cx={x} cy={y} r="3.200" fill="#d5e5ec" stroke="#333" />
    <path d={`M${x + 2} ${y + 2}l4 4`} stroke="#222" strokeWidth="1.800" />
  </>
);
const bell = (x: number) => (
  <path d={`M${x} 3c-3 0-2 4-4 7h8c-2-3-1-7-4-7zM${x - 1} 11h2`} fill="#ffe000" stroke="#8a7400" strokeWidth=".8" />
);
const ray = (c: string) => (
  <>
    <circle cx="4" cy="7" r="1.300" stroke={c} />
    <path d="M5 7h9" stroke={c} strokeWidth="1.500" />
  </>
);
const oval = (c: string, f: string) => (
  <>
    <ellipse cx="7" cy="7" rx="5.500" ry="3.800" transform="rotate(-12 7 7)" stroke={c} fill={f} strokeWidth="1.300" />
    {plus(1.5, 11)}
    {plus(12.5, 3)}
  </>
);
const diag = (c: string) => <path d="M0 14L14 0" stroke={c} strokeWidth="1.300" />;
const flat = (c: string) => <path d="M0 7h14" stroke={c} strokeWidth="1.600" />;

const tools: [string, React.ReactNode][] = [
  ["Cursor", <path d="M5 2v9l2-2 2 4 1-1-1.500-3.500H11z" fill="#fff" stroke="#444" strokeWidth=".8" />],
  ["Zoom", lens(6, 5)],
  ["Zoom de zona", <><path d="M1 4v8h7" stroke="#1a4ae0" strokeDasharray="2 1" />{lens(7, 5)}</>],
  ["Alerta manual", <>{bell(5)}<path d="M1 4h12M9 2l2 2 3-3" stroke="#2233dd" /><path d="M9 5v7l2-2 1 2" fill="#fff" stroke="#666" strokeWidth=".6" /></>],
  ["Alerta", <>{bell(7)}<path d="M2 3L1 5M12 3l1 2" stroke="#555" /></>],
  ["Fibonacci extensión", <><path d="M0 9l3-7 3 6h3" stroke="#222" /><path d="M5 5h9" stroke="#e06a5a" /><path d="M3 9h5" stroke="#2233dd" /><text x="9" y="13" fontSize="7" fontWeight="bold" fill="#1a2af0">F</text></>],
  ["Fibonacci retroceso", <><path d="M2 5h11" stroke="#e06a5a" strokeDasharray="2 1" /><path d="M2 7h11" stroke="#2233dd" /><text x="9" y="13" fontSize="7" fontWeight="bold" fill="#1a2af0">F</text></>],
  ["Rectángulo azul", <><path d="M2 3.500h10v7H2z" stroke="#6d95ea" />{plus(1.5, 11)}{plus(12.500, 3)}</>],
  ["Rectángulo rojo", <><path d="M2 3.500h10v7H2z" stroke="#e01414" fill="#c79ca2" />{plus(1.5, 11)}{plus(12.500, 3)}</>],
  ["Flecha", <><path d="M3 11l7-7" stroke="#111" strokeWidth="1.600" /><path d="M7 2h5.500v5.500z" fill="#111" /><circle cx="2.500" cy="11.500" r="1.400" stroke="#111" /></>],
  ["Texto", <><path d="M1.500 1.500h11v8l-3 3h-8z" stroke="#6d95ea" fill="#b3cbdc" /><text x="4.500" y="10" fontSize="8" fontWeight="bold" fill="#111">T</text></>],
  ["Globo de texto", <><circle cx="7" cy="6.500" r="5.500" stroke="#6d95ea" fill="#b3cbdc" /><path d="M9 12l1 2 1-4" stroke="#6d95ea" /><text x="4.500" y="10" fontSize="8" fontWeight="bold" fill="#147a14">T</text></>],
  ["Segmento", <><path d="M4 10l6-6" stroke="#333" strokeWidth="1.300" /><circle cx="3" cy="11" r="1.500" stroke="#333" /><circle cx="11" cy="3" r="1.500" stroke="#333" /></>],
  ["Rayo verde claro", ray("#6cea6c")],
  ["Rayo verde", ray("#1fae1f")],
  ["Rayo verde oscuro", ray("#0b6e0b")],
  ["Rayo rojo", ray("#f01010")],
  ["Regla", <path d="M0.500 10L10.500 1.500l3 3L4 13zM4 8l1.500 1.500M6.500 6L8 7.500M9 4l1.500 1.500" stroke="#5a6d77" />],
  ["Canal", <><path d="M0 2h14M0 12h14" stroke="#dd5a5a" strokeDasharray="2 1" /><path d="M0 3h14v4H0z" fill="#8dc79a" /><path d="M0 9l4-4 3 5 4-6 3 3" stroke="#8a8ad8" /></>],
  ["Elipse roja", oval("#e81414", "#c79ca2")],
  ["Elipse marrón", oval("#8a6a4a", "#a89a8c")],
  ["Elipse verde", oval("#1a8a2a", "#8fb8a8")],
  ["Elipse lima", oval("#2ee82e", "#93d0b0")],
  ["Línea oscura", diag("#333")],
  ["Línea verde", diag("#1fae1f")],
  ["Línea roja", diag("#f01010")],
  ["Horizontal oscura", flat("#333")],
  ["Horizontal salmón", flat("#f09078")],
  ["Horizontal lima", flat("#10e010")],
  ["Horizontal verde", flat("#0b7a1b")],
  ["Horizontal roja", flat("#f01010")],
  ["Horizontal celeste", flat("#5a8ef0")],
  ["Horizontal marino", flat("#0000a8")],
  ["Vertical", <path d="M7.500 0v14" stroke="#333" />],
  ["Ángulo", <><path d="M0 11L11 3M0 11h13" stroke="#e06060" /><path d="M7 11a5 5 0 0 0-2-4" stroke="#1a2af0" /><text x="8" y="9" fontSize="7" fontWeight="bold" fill="#1a2af0">α</text></>],
  ["Ciclo", <><circle cx="7" cy="7" r="5.500" stroke="#ee7a30" />{plus(5, 7)}{plus(9, 5)}</>],
  ["Impulso", <><path d="M0 12l2-8 3 7 3-8 3 6" stroke="#1a2af0" strokeDasharray="2 1" />{plus(8, 2)}{plus(12, 7)}{plus(6, 12)}</>],
  ["Corrección", <><path d="M1 1l3 11 5-6 4 7" stroke="#1a2af0" strokeDasharray="2 1" />{plus(9, 4)}{plus(12, 12)}{plus(3, 12)}</>],
  ["Aceptar", <path d="M0 8l3-2 2 3 7-8 2 1L6 13z" fill="#3fcf4a" stroke="#1d7a26" strokeWidth=".7" />],
  ["Me gusta", <path d="M0 6h3v7H0zM4 7l3-3V0l2 1v4h4.500L13 12l-2 1H4z" fill="#3fcf4a" stroke="#1d7a26" strokeWidth=".7" />],
  ["Borrar", <path d="M1 3l2-2 4 3.500L11 1l2 2-3.500 4L13 11l-2 2-4-3.500L3 13l-2-2 3.500-4z" fill="#f01010" stroke="#a00808" strokeWidth=".6" />],
];

function ToolColumn() {
  return (
    <Side aria-label="Herramientas de dibujo">
      <SideRow $h={10} $line aria-label="Subir">
        <svg width="7" height="5" viewBox="0 0 7 5" fill="none" stroke="#56707c">
          <path d="M1 4l2.500-2.500L6 4" />
        </svg>
      </SideRow>
      <ToolList>
        {tools.map(([name, art], i) => (
          <Tool key={name} $on={i === 0} aria-label={name}>
            <svg width="14" height="14" viewBox="0 0 14 14" fill="none">
              {art}
            </svg>
          </Tool>
        ))}
      </ToolList>
      <SideRow $h={5} aria-label="Aviso">
        <svg width="8" height="5" viewBox="0 0 8 5">
          <path d="M4 1l3 4H1z" fill="#f0b020" stroke="#8a5a00" strokeWidth=".5" />
        </svg>
      </SideRow>
      <SideRow $h={10} $line aria-label="Bajar">
        <Chevron />
      </SideRow>
      <SideRow $h={26} aria-label="Configurar">
        <svg width="17" height="17" viewBox="0 0 17 17" fill="none">
          <path d="M5 2h7l2 2v8H5z" fill="#f4f4f4" stroke="#666" />
          <circle cx="4" cy="4" r="3.500" fill="#148a24" />
          <path d="M4 2v4" stroke="#fff" />
          <path d="M6 13l6-6 1 2 2 0-5 6z" fill="#fff" stroke="#333" />
          <path d="M12 14h5l-2 3z" fill="#111" />
        </svg>
      </SideRow>
      <SideRow $h={20} aria-label="Más herramientas">
        <svg width="13" height="9" viewBox="0 0 13 9" fill="#111">
          <path d="M0 1h2v2H0zM4 1h2v2H4zM8 1h2v2H8zM8 5h5L10.500 8z" />
        </svg>
      </SideRow>
    </Side>
  );
}

/* ------------------------------------------------------------------ */
/* Bottom bar                                                          */
/* ------------------------------------------------------------------ */

const BottomBar = styled.footer`
  display: flex;
  align-items: center;
  height: 16px;
  background: linear-gradient(#8ba9b6, ${steel} 3px);
  border-left: 1px solid ${edge};
`;

const BarButton = styled.button<{ $w: number }>`
  display: flex;
  align-items: center;
  justify-content: center;
  width: ${(p) => p.$w}px;
  height: 14px;
  flex: none;
`;

const Arrow = styled.button`
  display: flex;
  align-items: center;
  justify-content: center;
  width: 11px;
  height: 11px;
  flex: none;
  border: 1px solid ${edge};
  border-radius: 2px;
  background: #b7d0db;
`;

const Track = styled.div`
  flex: 1;
  display: grid;
  grid-template-columns: 1229fr 65fr 34fr;
  height: 11px;
  border: solid #7d98a5;
  border-width: 1px 0;
`;

const Thumb = styled.div`
  grid-column: 2;
  border: solid ${edge};
  border-width: 0 1px;
  background: linear-gradient(#c8dde6, #a9c6d2);
`;

const Pic = ({ children, w = 13 }: { children: React.ReactNode; w?: number }) => (
  <svg width={w} height="13" viewBox={`0 0 ${w} 13`} fill="none">
    {children}
  </svg>
);

const Angle = ({ d }: { d: string }) => (
  <svg width="5" height="6" viewBox="0 0 5 6" fill="none" stroke="#111" strokeWidth="1.300">
    <path d={d} />
  </svg>
);

function Footer() {
  return (
    <BottomBar>
      <BarButton $w={22} aria-label="Dibujo">
        <Pic>
          <path d="M0 2l5 9 4-9" stroke="#c22" />
          <path d="M5 12L11 2l2 1-6 9z" fill="#e8b84a" stroke="#6a4a10" strokeWidth=".7" />
          <path d="M0 5l4-2v9" stroke="#2a7a2a" />
        </Pic>
      </BarButton>
      <BarButton $w={18} aria-label="Compartir">
        <Pic>
          <path d="M3 7l6-4M3 7l6 4" stroke="#fff" />
          <path d="M1 5h4v4H1zM8 1h3v3H8zM8 9h3v3H8z" fill="#fff" />
          <path d="M9 9h4l-2 3z" fill="#111" />
        </Pic>
      </BarButton>
      <BarButton $w={18} aria-label="Comentarios">
        <Pic>
          <path d="M1 1h8v6H4L2 9V7H1z" fill="#cfe2ff" stroke="#3a78d8" />
          <path d="M4 5h8v5h-3l-1 2-1-2H4z" fill="#3a7ff0" stroke="#1a50b0" strokeWidth=".7" />
        </Pic>
      </BarButton>
      <BarButton $w={17} aria-label="Informe">
        <Pic>
          <path d="M2.500 1h8v11h-8z" fill="#eee" stroke="#555" />
          <path d="M4 6V3h5" stroke="#1a8a2a" />
          <path d="M4 10l5-5" stroke="#d01818" strokeWidth="1.500" />
        </Pic>
      </BarButton>
      <BarButton $w={18} aria-label="Libro de órdenes">
        <Pic>
          <path d="M1 1h7v2H1zM3 5h5v2H3zM1 9h7v2H1z" fill="#15a02a" stroke="#0a6a1a" strokeWidth=".6" />
          <path d="M8 1h3v2H8zM8 5h5v2H8zM8 9h4v2H8z" fill="#e22020" stroke="#901010" strokeWidth=".6" />
        </Pic>
      </BarButton>
      <BarButton $w={17} aria-label="Ventanas">
        <Pic>
          <path d="M1 1h7v6H1zM3 4h7v5H3z" fill="#eee" stroke="#2a60b8" />
          <path d="M5 6h7v6H5z" fill="#fff" stroke="#2a60b8" />
          <path d="M6 10l2-2 1 1 2-2" stroke="#1a9a2a" />
        </Pic>
      </BarButton>
      <BarButton $w={12} aria-label="Plegar">
        <svg width="7" height="6" viewBox="0 0 7 6" fill="none" stroke="#222">
          <path d="M3 0L1 3l2 3M6 0L4 3l2 3" />
        </svg>
      </BarButton>
      <Arrow aria-label="Anterior">
        <Angle d="M3.500 1l-2 2 2 2" />
      </Arrow>
      <Track>
        <Thumb />
      </Track>
      <Arrow aria-label="Siguiente">
        <Angle d="M1.500 1l2 2-2 2" />
      </Arrow>
      <BarButton $w={22} aria-label="Deshacer">
        <Pic>
          <path d="M4 5c6-2 8 1 5 6" stroke="#1c62c8" strokeWidth="2" />
          <path d="M5 1v8L0 5z" fill="#1c62c8" />
        </Pic>
      </BarButton>
      <BarButton $w={16} aria-label="Rehacer">
        <Pic>
          <path d="M9 5C3 3 1 6 4 11" stroke="#84acc8" strokeWidth="2" />
          <path d="M8 1v8l5-4z" fill="#84acc8" />
        </Pic>
      </BarButton>
      <BarButton $w={20} aria-label="Ajustes">
        <Pic>
          <path d="M7 1h5v10H7z" fill="#2fb840" />
          <path d="M2 12l6-6V3l3-1-1 3 2 1-1 2H8l-5 5z" fill="#f4f4f4" stroke="#444" strokeWidth=".7" />
          <path d="M0 9l4-3 2 3-3 3z" fill="#d02828" />
        </Pic>
      </BarButton>
      <BarButton $w={17} aria-label="Zoom automático">
        <Pic>
          <circle cx="5.500" cy="5" r="4" fill="#e8f0f4" stroke="#333" />
          <path d="M8 8l3 4" stroke="#222" strokeWidth="1.800" />
          <path d="M0 12h7M12 1v8" stroke="#1a2af0" strokeDasharray="2 1" />
        </Pic>
      </BarButton>
      <BarButton $w={18} aria-label="Alejar">
        <Pic>
          <circle cx="5.500" cy="5" r="4" fill="#e8f0f4" stroke="#333" />
          <path d="M8 8l4 4" stroke="#222" strokeWidth="2" />
          <path d="M3.500 5h4" stroke="#1a2af0" strokeWidth="1.500" />
        </Pic>
      </BarButton>
      <BarButton $w={19} aria-label="Acercar">
        <Pic>
          <circle cx="5.500" cy="5" r="4" fill="#e8f0f4" stroke="#333" />
          <path d="M8 8l4 4" stroke="#222" strokeWidth="2" />
          <path d="M3.500 5h4M5.500 3v4" stroke="#1a2af0" strokeWidth="1.500" />
        </Pic>
      </BarButton>
      <BarButton $w={14} aria-label="Espaciado">
        <Pic w={12}>
          <path d="M0 4h12" stroke="#111" strokeWidth="2" strokeDasharray="2 1" />
          <path d="M5 6h2v2h2l-3 4-3-4h2z" fill="#3a6ee8" />
        </Pic>
      </BarButton>
    </BottomBar>
  );
}

/* ------------------------------------------------------------------ */
/* Page                                                                */
/* ------------------------------------------------------------------ */

const Shell = styled.div`
  display: grid;
  grid-template-rows: auto minmax(0, 1fr) auto;
  height: 100vh;
`;

const Work = styled.div`
  display: grid;
  grid-template-columns: 23px minmax(0, 1fr);
  min-height: 0;
`;

const Panels = styled.main`
  display: grid;
  grid-template-rows:
    minmax(0, 545fr) minmax(0, 90fr) minmax(0, 75fr) minmax(0, 55fr)
    minmax(0, 48fr) 12px;
  min-height: 0;
`;

export default function App() {
  return (
    <Shell>
      <GlobalStyle />
      <Toolbar />
      <Work>
        <ToolColumn />
        <Panels>
          <PricePanel />
          <TrainPanel />
          <WillyPanel />
          <AwesomePanel />
          <ForcePanel />
          <TimeRow>
            <TimeTrack>
              {dates.map(([x, text]) => (
                <TimeMark key={x} style={{ left: `${((x - X0) / XW) * 100}%` }}>
                  {text}
                </TimeMark>
              ))}
            </TimeTrack>
          </TimeRow>
        </Panels>
      </Work>
      <Footer />
    </Shell>
  );
}
